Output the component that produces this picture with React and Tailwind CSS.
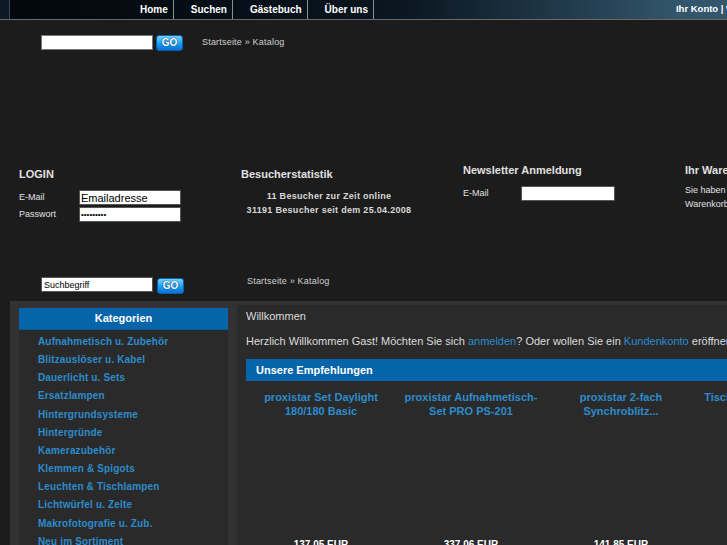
const navItems = ["Home", "Suchen", "Gästebuch", "Über uns"]

const categories = [
  "Aufnahmetisch u. Zubehör",
  "Blitzauslöser u. Kabel",
  "Dauerlicht u. Sets",
  "Ersatzlampen",
  "Hintergrundsysteme",
  "Hintergründe",
  "Kamerazubehör",
  "Klemmen & Spigots",
  "Leuchten & Tischlampen",
  "Lichtwürfel u. Zelte",
  "Makrofotografie u. Zub.",
  "Neu im Sortiment",
  "Reflektoren",
]

const products = [
  { title: "proxistar Set Daylight 180/180 Basic", price: "137,05 EUR" },
  { title: "proxistar Aufnahmetisch-Set PRO PS-201", price: "337,06 EUR" },
  { title: "proxistar 2-fach Synchroblitz...", price: "141,85 EUR" },
  { title: "Tischstativ mit Kugelkopf", price: "49,95 EUR" },
]

function GoButton() {
  return (
    <button className="ml-[3px] h-[16px] w-[27px] rounded-[3px] border border-[#0a5fae] bg-linear-to-b from-[#6fd3ff] via-[#1aa3f4] to-[#0a6fd6] text-[10px] font-bold leading-[14px] text-white [text-shadow:0_0_1px_#003a78,0_0_1px_#003a78]">
      GO
    </button>
  )
}

function Breadcrumb({ className = "" }) {
  return (
    <span className={`text-[9px] tracking-[0.2px] text-[#d0d0d0] ${className}`}>
      Startseite » Katalog
    </span>
  )
}

export default function App() {
  return (
    <div className="h-[545px] w-full overflow-hidden bg-[#1c1c1c] font-['Liberation_Sans',Arial,sans-serif]">
      <div className="w-[1000px]">
        {/* top navigation */}
        <div className="flex h-[20px] border-b border-[#6a6a6a] bg-linear-to-r from-[#03070b] via-[#0a1620] via-40% to-[#33566c] to-68%">
          <div className="w-[9px] bg-[#0d1a26]" />
          <div className="w-[114px] border-l border-[#3a4650]" />
          {navItems.map(item => (
            <div
              key={item}
              className="flex items-center border-r border-[#8a8f94] pl-[17px] pr-[5px] text-[10px] font-bold text-white"
            >
              {item}
            </div>
          ))}
          <div className="ml-[302px] flex items-center text-[9.5px] font-bold text-white">
            Ihr Konto | Warenkorb | Kasse
          </div>
        </div>

        {/* first search row */}
        <div className="mt-[14px] flex h-[17px] items-center pl-[41px]">
          <input className="h-[15px] w-[112px] border border-[#777] bg-white outline-none" />
          <GoButton />
          <Breadcrumb className="ml-[19px]" />
        </div>

        {/* info boxes */}
        <div className="mt-[109px] flex text-[#e0e0e0]">
          <div className="w-[241px] pl-[19px] pt-[8px]">
            <h3 className="text-[11px] font-bold leading-[12px]">LOGIN</h3>
            <div className="mt-[10px] flex items-center">
              <span className="w-[60px] text-[9px]">E-Mail</span>
              <input
                defaultValue="Emailadresse"
                className="h-[15px] w-[102px] border border-[#555] bg-white px-[1px] text-[11px] leading-[13px] text-black outline-none"
              />
            </div>
            <div className="mt-[2px] flex items-center">
              <span className="w-[60px] text-[9px]">Passwort</span>
              <input
                type="password"
                defaultValue="passwort1"
                className="h-[15px] w-[102px] border border-[#555] bg-white px-[1px] text-[8px] text-black outline-none"
              />
            </div>
          </div>

          <div className="w-[222px] pt-[8px]">
            <h3 className="text-[11px] font-bold leading-[12px]">Besucherstatistik</h3>
            <div className="mt-[9px] w-[176px] text-center text-[9px] font-bold leading-[14px] tracking-[0.3px] text-[#d8d8d8]">
              <p>11 Besucher zur Zeit online</p>
              <p>31191 Besucher seit dem 25.04.2008</p>
            </div>
          </div>

          <div className="w-[222px] pt-[4px]">
            <h3 className="text-[11px] font-bold leading-[12px]">Newsletter Anmeldung</h3>
            <div className="mt-[10px] flex items-center">
              <span className="w-[58px] text-[9px]">E-Mail</span>
              <input className="h-[15px] w-[94px] border border-[#555] bg-white outline-none" />
            </div>
          </div>

          <div className="w-[222px] pt-[4px]">
            <h3 className="text-[11px] font-bold leading-[12px]">Ihr Warenkorb</h3>
            <p className="mt-[8px] w-[150px] text-[9px] leading-[13.5px]">
              Sie haben noch keine Artikel in Ihrem Warenkorb.
            </p>
          </div>
        </div>

        {/* second search row */}
        <div className="mt-[54px] flex h-[17px] items-center pl-[41px]">
          <input
            defaultValue="Suchbegriff"
            className="h-[15px] w-[112px] border border-[#555] bg-white px-[2px] text-[9px] text-black outline-none"
          />
          <div className="ml-[1px] -mt-[1px]">
            <GoButton />
          </div>
          <Breadcrumb className="ml-[63px] -mt-[6px]" />
        </div>

        {/* main panel */}
        <div className="ml-[10px] mt-[8px] flex h-[300px] items-start bg-[#323232] pl-[9px]">
          <div className="mt-[7px] w-[209px] bg-[#2a2a2a]">
            <div className="flex h-[22px] items-center justify-center border-b border-[#0a5a96] bg-[#0664aa] text-[11px] font-bold text-white">
              Kategorien
            </div>
            <ul className="pl-[19px] pt-[3px]">
              {categories.map(c => (
                <li key={c} className="text-[10px] font-bold leading-[18.15px] tracking-[0.15px] text-[#2c8ccc]">
                  {c}
                </li>
              ))}
            </ul>
          </div>

          <div className="ml-[9px] mt-[4px] h-[260px] flex-1 bg-[#2a2a2a] pl-[9px] pt-[4px] text-[#dcdcdc]">
            <h2 className="text-[11px] leading-[14px]">Willkommen</h2>
            <p className="mt-[11px] whitespace-nowrap text-[11px] leading-[14px]">
              Herzlich Willkommen Gast! Möchten Sie sich{" "}
              <a className="text-[#2c8ccc]">anmelden</a>? Oder wollen Sie ein{" "}
              <a className="text-[#2c8ccc]">Kundenkonto</a> eröffnen?
            </p>
            <div className="mt-[11px] flex h-[22px] items-center bg-[#0664aa] pl-[10px] text-[11px] font-bold text-white">
              Unsere Empfehlungen
            </div>
            <div className="mt-[10px] flex">
              {products.map(p => (
                <div key={p.title} className="flex w-[150px] flex-col items-center">
                  <div className="h-[147px] w-[140px] text-center text-[11px] font-bold leading-[13.5px] text-[#2c8ccc]">
                    {p.title}
                  </div>
                  <div className="text-[10px] font-bold leading-[13px] text-white">{p.price}</div>
                </div>
              ))}
            </div>
          </div>
        </div>
      </div>
    </div>
  )
}
